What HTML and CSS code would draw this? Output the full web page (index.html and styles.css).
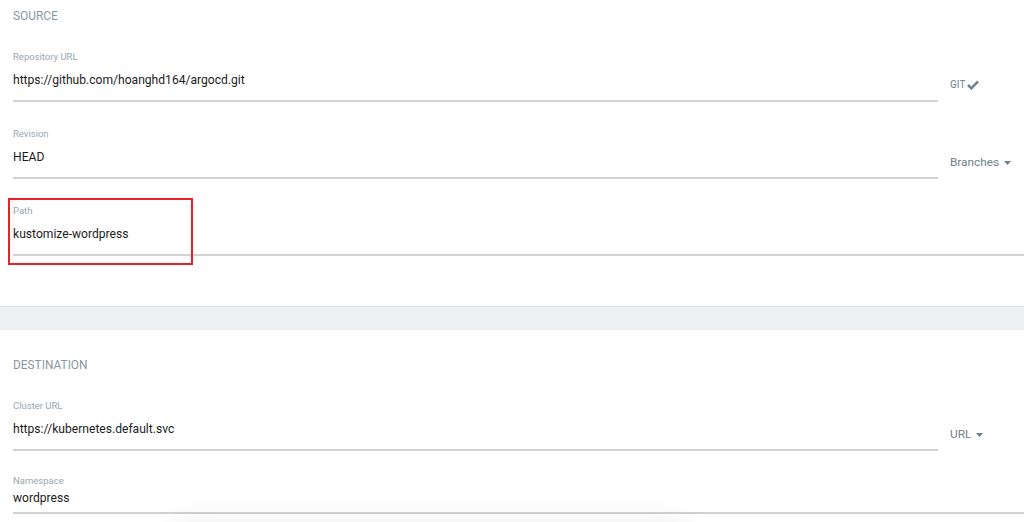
FILE: index.html
```html
<!DOCTYPE html>
<html>
<head>
<meta charset="utf-8">
<link rel="stylesheet" href="styles.css">
</head>
<body>
<div class="page">
  <section class="section source">
    <div class="section-title">SOURCE</div>

    <div class="row">
      <div class="field">
        <div class="label">Repository URL</div>
        <div class="value">https://github.com/hoanghd164/argocd.git</div>
      </div>
      <div class="addon">GIT<svg class="check" width="12" height="10" viewBox="0 0 12 10"><polyline points="1,5 4.4,8.3 11,1.4" fill="none" stroke="#6e808b" stroke-width="2.5"/></svg></div>
    </div>

    <div class="row">
      <div class="field">
        <div class="label">Revision</div>
        <div class="value">HEAD</div>
      </div>
      <div class="addon addon-lg">Branches<svg class="caret" width="7" height="4" viewBox="0 0 7 4"><polygon points="0,0 7,0 3.5,4" fill="#6e808b"/></svg></div>
    </div>

    <div class="row">
      <div class="field field-wide">
        <div class="label">Path</div>
        <div class="value">kustomize-wordpress</div>
        <div class="highlight"></div>
      </div>
    </div>
  </section>

  <div class="band"></div>

  <section class="section destination">
    <div class="section-title">DESTINATION</div>

    <div class="row">
      <div class="field">
        <div class="label">Cluster URL</div>
        <div class="value">https://kubernetes.default.svc</div>
      </div>
      <div class="addon addon-lg">URL<svg class="caret" width="7" height="4" viewBox="0 0 7 4"><polygon points="0,0 7,0 3.5,4" fill="#6e808b"/></svg></div>
    </div>

    <div class="row">
      <div class="field field-wide field-compact">
        <div class="label">Namespace</div>
        <div class="value">wordpress</div>
      </div>
    </div>
  </section>

  <div class="floating-shadow"></div>
</div>
</body>
</html>
```

FILE: styles.css
```css
* { box-sizing: border-box; }

html, body {
  margin: 0;
  padding: 0;
  background: #fff;
}

body {
  font-family: Roboto, "Liberation Sans", Arial, sans-serif;
  color: #212121;
}

.page {
  position: relative;
  width: 1024px;
  height: 522px;
  overflow: hidden;
  background: #fff;
}

.section {
  padding-left: 13px;
}

.source {
  padding-top: 8px;
  padding-bottom: 50px;
}

.destination {
  padding-top: 27px;
}

.section-title {
  font-size: 11.9px;
  line-height: 17px;
  color: #8797a3;
}

.row {
  display: flex;
  align-items: stretch;
}

.field {
  position: relative;
  flex: 1;
  padding-top: 26px;
  padding-bottom: 12px;
  border-bottom: 2px solid #d2d2d2;
}

.field-compact {
  padding-top: 24px;
  padding-bottom: 6px;
}

.label {
  font-size: 9.5px;
  line-height: 12px;
  color: #97a7b2;
}

.value {
  margin-top: 9px;
  font-size: 12.1px;
  line-height: 16px;
  color: #1c1c1c;
}

.field-compact .value {
  margin-top: 3px;
}

.addon {
  width: 86px;
  flex: none;
  align-self: flex-end;
  padding-left: 12px;
  padding-bottom: 9px;
  font-size: 10px;
  line-height: 16px;
  color: #6e808b;
  display: flex;
  align-items: center;
}

.addon-lg {
  font-size: 11.8px;
}

.check {
  margin-left: 2px;
  margin-top: -1px;
}

.caret {
  margin-left: 5px;
  margin-top: 1px;
}

.highlight {
  position: absolute;
  left: -5px;
  top: 19px;
  width: 185px;
  height: 67px;
  border: 2px solid #ec1f26;
}

.band {
  height: 24px;
  background: #eef1f4;
  border-top: 1px solid #e1e4e7;
}

.floating-shadow {
  position: absolute;
  left: 185px;
  top: 532px;
  width: 490px;
  height: 50px;
  background: #fff;
  box-shadow: 0 0 30px 10px rgba(0, 0, 0, 0.07);
}
```
